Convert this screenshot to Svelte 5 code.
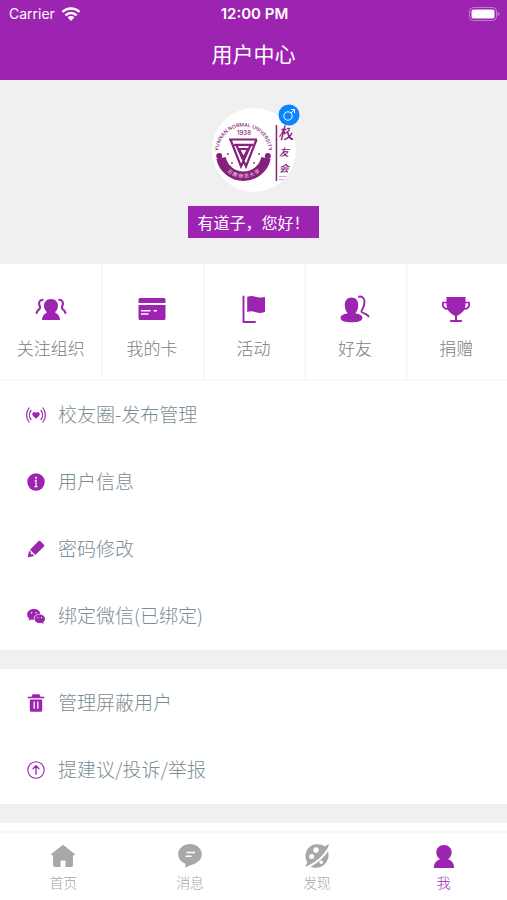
<script>
  const shortcuts = [
    { icon: 'group', label: '关注组织' },
    { icon: 'card', label: '我的卡' },
    { icon: 'flag', label: '活动' },
    { icon: 'friends', label: '好友' },
    { icon: 'trophy', label: '捐赠' }
  ];
  const sections = [
    [
      { icon: 'live', label: '校友圈-发布管理' },
      { icon: 'info', label: '用户信息' },
      { icon: 'pencil', label: '密码修改' },
      { icon: 'wechat', label: '绑定微信(已绑定)' }
    ],
    [
      { icon: 'trash', label: '管理屏蔽用户' },
      { icon: 'up', label: '提建议/投诉/举报' }
    ]
  ];
  const tabs = [
    { icon: 'home', label: '首页' },
    { icon: 'chat', label: '消息' },
    { icon: 'explore', label: '发现' },
    { icon: 'me', label: '我' }
  ];
  let active = $state('me');
</script>

{#snippet glyph(name)}
  {#if name === 'group'}
    <svg viewBox="0 0 32 32" width="32" height="32" aria-hidden="true">
      <path fill="currentColor" d="M16 6c4.200 0 7 2.900 7 6.800 0 2.700-1.200 4.700-2.700 6v1c2.600 1 4.300 3.400 4.800 7.200H6.900c.5-3.800 2.200-6.200 4.800-7.200v-1c-1.500-1.300-2.700-3.300-2.700-6C9 8.900 11.800 6 16 6z" />
      <path class="line" stroke-width="2.100" d="M7.700 6.800C4.400 7 3.100 10 4.700 13c.7 1.500.6 2.400-.6 3.300-1.300.9-2.100 2-2.500 3.600M24.300 6.800c3.300.2 4.600 3.200 3 6.200-.7 1.500-.6 2.400.6 3.300 1.300.9 2.100 2 2.500 3.600" />
    </svg>
  {:else if name === 'card'}
    <svg viewBox="0 0 32 32" width="32" height="32" aria-hidden="true">
      <path fill="currentColor" d="M4 5h24q1.500 0 1.500 1.500V10h-27V6.500Q2.500 5 4 5zM2.500 12h27v13.500q0 1.500-1.500 1.500H4q-1.500 0-1.500-1.500z" />
      <path stroke="#fff" stroke-width="1.600" d="M5 17.700h9.500M5 21h7.500M17.500 17.700h3.500" />
    </svg>
  {:else if name === 'flag'}
    <svg viewBox="0 0 32 32" width="32" height="32" aria-hidden="true">
      <path class="line" stroke-width="1.900" d="M5.500 3.500V29H17" />
      <path fill="currentColor" d="M9.200 4c3-1.500 5.500-1.200 8.300-.2 3.200 1.100 5.500 1 8.800.2q.7 0 .7.700v14c-3.500 1.500-6 1.500-9 .5-3.200-1-5.500-1.500-8.800-.2z" />
    </svg>
  {:else if name === 'friends'}
    <svg viewBox="0 0 32 32" width="32" height="32" aria-hidden="true">
      <path fill="currentColor" d="M12.500 4.500c4 0 6.700 2.800 6.700 7.300 0 3.600-.8 6.200-2.500 7.800v.8c4 .4 6.700 2 6.700 4.500 0 2.900-4.700 4.300-10.900 4.300S1.600 27.800 1.600 24.900c0-2.500 2.700-4.100 6.700-4.500v-.8c-1.700-1.600-2.500-4.200-2.500-7.800 0-4.500 2.700-7.300 6.700-7.300z" />
      <path class="line" stroke-width="1.900" d="M20 3.700c3-.7 5.500 1.600 5.500 5 0 3-.8 5.200-2 7.200-1.200 1.900-1.500 2.900-.3 3.600l3.500 1.600c1.500.7 2.300 1.100 2.800 2.300" />
    </svg>
  {:else if name === 'trophy'}
    <svg viewBox="0 0 32 32" width="32" height="32" aria-hidden="true">
      <path fill="currentColor" d="M6.500 4h19v7c0 6-2.700 8.500-8.500 12h-2c-5.800-3.500-8.500-6-8.500-12zM15 22h2v5h4.500q.5 0 .5.800 0 1.200-.8 1.200H10.800q-.8 0-.8-1.200 0-.8.500-.8H15z" />
      <path class="line" stroke-width="1.700" d="M7 9.500H3c-1.200 4 2 7.500 6 6.200M25 9.500h4c1.200 4-2 7.500-6 6.200" />
    </svg>
  {:else if name === 'live'}
    <svg viewBox="0 0 20 20" width="20" height="20" aria-hidden="true">
      <path fill="currentColor" d="M10 13.700c-2.300-1.900-3.700-2.900-3.700-4.600 0-2.200 2.600-2.800 3.700-1.100 1.100-1.700 3.700-1.100 3.700 1.100 0 1.700-1.400 2.700-3.700 4.600z" />
      <path class="line" stroke-width="1.200" d="M5 5.500c-2.100 2.600-2.100 6.400 0 9M3 3C-.2 7-.2 13 3 17M15 5.500c2.100 2.600 2.100 6.400 0 9M17 3c3.200 4 3.200 10 0 14" />
    </svg>
  {:else if name === 'info'}
    <svg viewBox="0 0 20 20" width="20" height="20" aria-hidden="true">
      <circle cx="10" cy="10" r="8.700" fill="currentColor" />
      <circle cx="10" cy="5.800" r="1" fill="#fff" />
      <path stroke="#fff" stroke-width="1.200" d="M8.800 8.400H10v6M8.500 14.600h3" fill="none" />
    </svg>
  {:else if name === 'pencil'}
    <svg viewBox="0 0 20 20" width="20" height="20" aria-hidden="true">
      <path fill="currentColor" d="M12.600 2q.8-.7 1.600 0L18 5.800q.7.800 0 1.600L9.300 16 4 10.700zM3.200 11.800l1.700 1.200-.1 2.200 2.100.1 1.200 1.700-5.600 1.300q-.8 0-.7-.8z" />
    </svg>
  {:else if name === 'wechat'}
    <svg viewBox="0 0 20 20" width="20" height="20" aria-hidden="true">
      <path fill="currentColor" d="M7.800 3c3.600 0 6.200 2 6.500 4.700-4 .1-6.800 2.400-6.500 6.100-1 .1-1.900 0-2.800-.3l-2.400 1.300.6-2.200C-1 8.700 1.800 3 7.800 3z" />
      <path fill="currentColor" d="M13.600 8.500c3.200 0 5.400 1.900 5.400 4.300 0 1.400-.7 2.500-1.800 3.300l.5 1.800-2-1.100c-4.100.9-7.200-1.100-7.200-4 0-2.400 2.100-4.300 5.100-4.300z" />
      <g fill="#fff"><circle cx="5.600" cy="6.700" r=".7" /><circle cx="10" cy="6.700" r=".7" /><circle cx="12" cy="11.700" r=".6" /><circle cx="15.500" cy="11.700" r=".6" /></g>
    </svg>
  {:else if name === 'trash'}
    <svg viewBox="0 0 20 20" width="20" height="20" aria-hidden="true">
      <path fill="currentColor" d="M6.500 1.300h7l.8 2.500h4v1.500H1.700V3.800h4zM3.800 6.500h12.400v10.800q0 1.500-1.500 1.500H5.300q-1.500 0-1.500-1.500z" />
      <path stroke="#fff" stroke-width="1.300" d="M8.200 8.500v7.200M11.800 8.500v7.200" />
    </svg>
  {:else if name === 'up'}
    <svg viewBox="0 0 20 20" width="20" height="20" aria-hidden="true">
      <circle class="line" cx="10" cy="10" r="8.200" stroke-width="1.100" />
      <path class="line" stroke-width="1.300" d="M10 14.200V6M7 8.700 10 5.800l3 2.900" />
    </svg>
  {:else if name === 'home'}
    <svg viewBox="0 0 26 26" width="26" height="26" aria-hidden="true">
      <path fill="currentColor" d="M13 1.800 24.800 11q.5 1-.5 1.200H23V22q0 2-2 2h-5.500v-5.500q0-1-1-1h-3q-1 0-1 1V24H5q-2 0-2-2v-9.800H1.700q-1-.2-.5-1.200z" />
    </svg>
  {:else if name === 'chat'}
    <svg viewBox="0 0 26 26" width="26" height="26" aria-hidden="true">
      <path fill="currentColor" d="M13 1c6.600 0 11.800 4.500 11.800 10.200 0 5-3.700 8.500-9 10.200-3.200 1.200-5.500 2-7.800 3.300.5-1.500.6-2.700 0-4.200-4.200-1.800-6.800-5-6.800-9.300C1.200 5.500 6.400 1 13 1z" />
      <path stroke="#fff" stroke-width="1.600" d="M9.500 9.500h8.500M8.500 13.300h6" />
    </svg>
  {:else if name === 'explore'}
    <svg viewBox="0 0 26 26" width="26" height="26" aria-hidden="true">
      <path fill="currentColor" d="M21 3.300 24.800 1c.3 5.400-10.500 17.500-21 22l-2.500.6 2-3.800C-1.200 12 3 1.200 13 1.200c3 0 5.800.7 8 2.100zM24 8.200c2.600 8.500-4 17-12.500 16.500-2 0-3.500-.3-5-1C12.800 20.500 20 14.500 24 8.200z" />
      <path class="gap" d="M4.500 23.500C12 20 20 13 24.500 6" />
      <g fill="#fff"><circle cx="12" cy="7" r="2.700" /><circle cx="7.700" cy="13.500" r="2.500" /><circle cx="17.200" cy="19.300" r="1.800" /></g>
    </svg>
  {:else}
    <svg viewBox="0 0 26 26" width="26" height="26" aria-hidden="true">
      <path fill="currentColor" d="M13 2c4.500 0 7.700 3.200 7.700 7.500 0 3-1.500 5-3.500 6.400v.6c3.300.7 5.800 3.500 6 8.500H2.800c.2-5 2.700-7.800 6-8.500v-.6c-2-1.400-3.500-3.400-3.500-6.400C5.300 5.200 8.500 2 13 2z" />
    </svg>
  {/if}
{/snippet}

<div class="app">
  <header>
    <div class="status">
      <span class="carrier">
        Carrier
        <svg viewBox="0 0 20 14" width="20" height="14" aria-hidden="true">
          <path fill="none" stroke="#fff" stroke-width="2.500" d="M1.500 5C6.200.2 13.800.2 18.500 5M4.500 8.300c3-3.100 8-3.100 11 0" />
          <path fill="#fff" d="M6.700 10.500c1.800-1.900 4.800-1.900 6.600 0L10 13.900z" />
        </svg>
      </span>
      <span class="time">12:00 PM</span>
      <span class="power">
        <svg viewBox="0 0 32 14" width="32" height="14" aria-hidden="true">
          <rect x="1.500" y=".5" width="27" height="13" rx="4" fill="none" stroke="#fff" stroke-opacity=".4" />
          <rect x="3.500" y="2.500" width="23" height="9" rx="2" fill="#fff" />
          <path fill="#fff" fill-opacity=".4" d="M29.500 5q2 .5 2 2t-2 2z" />
        </svg>
      </span>
    </div>
    <h1>用户中心</h1>
  </header>

  <section class="profile">
    <div class="avatar">
      <svg viewBox="0 0 84 84" width="84" height="84" role="img" aria-label="Yunnan Normal University">
        <defs>
          <clipPath id="disc"><circle cx="42" cy="42" r="42" /></clipPath>
          <path id="upper" d="M6.500 47V43.500A25 25 0 0 1 56.500 43.500V47" />
          <path id="lower" d="M6.800 45.200A24.700 24.700 0 0 0 56.200 45.200" />
        </defs>
        <circle cx="42" cy="42" r="42" fill="#fff" />
        <g clip-path="url(#disc)" fill="#862078">
          <text class="ring"><textPath href="#upper" startOffset="50%" text-anchor="middle">YUNNAN NORMAL UNIVERSITY</textPath></text>
          <text class="year" x="32" y="27" text-anchor="middle">1938</text>
          <path d="M9 50A23 23 0 0 0 54 50" fill="none" stroke="#862078" stroke-width="9.500" />
          <circle cx="7.200" cy="48" r="3" /><circle cx="55.800" cy="48" r="3" />
          <text class="band" fill="#e5c8e2"><textPath href="#lower" startOffset="50%" text-anchor="middle">云 南 师 范 大 学</textPath></text>
          <path fill="none" stroke="#862078" stroke-width="2.200" d="M17 31.500h28M18.500 31.500 29 58.500 38.500 37.200M44.500 31.500 34 58.500 24.500 37.200M22 36.800h19M27 41h9l-4.500 9z" />
          <g opacity=".8"><circle cx="16" cy="46" r="1.100" /><circle cx="20" cy="55" r="1.100" /><circle cx="42" cy="55" r="1.100" /><circle cx="47" cy="46" r="1.100" /></g>
          <path d="M63.700 17h1.500v56h-1.500z" />
          <text class="brush" x="66" y="31" font-size="16">校</text>
          <text class="brush" x="67" y="48" font-size="10">友</text>
          <text class="brush" x="67" y="64" font-size="10">会</text>
          <path opacity=".5" d="M67 68h8v.8h-8zM67 71h6v.8h-6z" />
        </g>
      </svg>
      <span class="gender">
        <svg viewBox="0 0 22 22" width="22" height="22" aria-hidden="true">
          <circle cx="11" cy="11" r="10.500" fill="#0a84ff" />
          <circle cx="10" cy="12" r="4.200" fill="none" stroke="#fff" />
          <path fill="none" stroke="#fff" d="m13 9 3.500-3.500M12.800 5.500h3.700v3.700" />
        </svg>
      </span>
    </div>
    <p class="hello">有道子，您好！</p>
  </section>

  <nav class="shortcuts" aria-label="快捷入口">
    {#each shortcuts as item}
      <button type="button">{@render glyph(item.icon)}<span>{item.label}</span></button>
    {/each}
  </nav>

  <main>
    {#each sections as rows}
      <ul>
        {#each rows as row}
          <li><button type="button">{@render glyph(row.icon)}<span>{row.label}</span></button></li>
        {/each}
      </ul>
    {/each}
    <div class="rest"></div>
  </main>

  <nav class="tabs" aria-label="主导航">
    {#each tabs as tab}
      <button type="button" class:active={active === tab.icon} onclick={() => (active = tab.icon)}>
        {@render glyph(tab.icon)}<span>{tab.label}</span>
      </button>
    {/each}
  </nav>
</div>

<style>
  :global(body) { margin: 0; background: #f0f0f0; }
  .app {
    min-height: 100vh;
    display: flex;
    flex-direction: column;
    background: #f0f0f0;
    font-family: "Noto Sans CJK SC", sans-serif;
    font-weight: 300;
  }
  svg { display: block; flex: none; }
  .line { fill: none; stroke: currentColor; stroke-linecap: round; stroke-linejoin: round; }
  .gap { fill: none; stroke: #fff; stroke-width: 1.5; }
  button {
    margin: 0;
    padding: 0;
    border: 0;
    background: none;
    font: inherit;
    color: inherit;
    cursor: pointer;
  }
  header { height: 80px; background: #9c24b0; color: #fff; }
  .status {
    display: grid;
    grid-template-columns: 1fr auto 1fr;
    align-items: center;
    height: 27px;
    padding: 0 7px 0 9px;
    font-family: Inter, sans-serif;
    font-size: 14px;
    font-weight: 400;
  }
  .carrier { display: flex; align-items: center; gap: 6px; }
  .time { font-size: 15px; font-weight: 600; }
  .power { justify-self: end; }
  h1 { margin: 0; font-size: 21px; font-weight: 400; line-height: 52px; text-align: center; }
  .profile {
    display: flex;
    flex-direction: column;
    align-items: center;
    gap: 14px;
    padding: 28px 0 26px;
  }
  .avatar { position: relative; }
  .gender { position: absolute; top: -4px; right: -4px; }
  .hello {
    margin: 0;
    padding: 0 9px;
    background: #9c24b0;
    color: #fff;
    font-size: 16px;
    font-weight: 400;
    line-height: 32px;
  }
  .ring { font: 500 5px Inter, sans-serif; }
  .year { font: 500 6px Inter, sans-serif; }
  .band { font: 500 5px "Noto Sans CJK SC", sans-serif; }
  .brush { font-family: "Noto Sans CJK SC", sans-serif; font-style: italic; font-weight: 500; }
  .shortcuts { display: flex; background: #fff; border-bottom: 2px solid #f8f8f8; }
  .shortcuts button {
    flex: 1 1 0;
    display: flex;
    flex-direction: column;
    align-items: center;
    gap: 11px;
    padding: 29px 0 19px;
    color: #9c24b0;
  }
  .shortcuts button + button { box-shadow: inset 2px 0 #f8f8f8; }
  .shortcuts span { color: #7c7c7c; font-size: 17px; line-height: 24px; }
  main { flex: 1; display: flex; flex-direction: column; gap: 19px; }
  ul { margin: 0; padding: 0 0 1px; list-style: none; background: #fff; }
  li button {
    display: flex;
    align-items: center;
    gap: 12px;
    width: 100%;
    height: 67px;
    padding: 0 26px;
    color: #9c24b0;
    text-align: left;
  }
  li + li button { border-top: 1px solid #fdfdfd; }
  li span { color: #7b8c95; font-size: 19px; line-height: 26px; padding-bottom: 2px; }
  .rest { flex: 1; background: #fff; }
  .tabs { display: flex; background: #fff; border-top: 2px solid #f8f8f8; }
  .tabs button {
    flex: 1 1 0;
    display: flex;
    flex-direction: column;
    align-items: center;
    gap: 3px;
    padding: 10px 0 8px;
    color: #a8a8a8;
  }
  .tabs span { font-size: 14px; line-height: 20px; }
  .tabs .active { color: #9c24b0; }
</style>
